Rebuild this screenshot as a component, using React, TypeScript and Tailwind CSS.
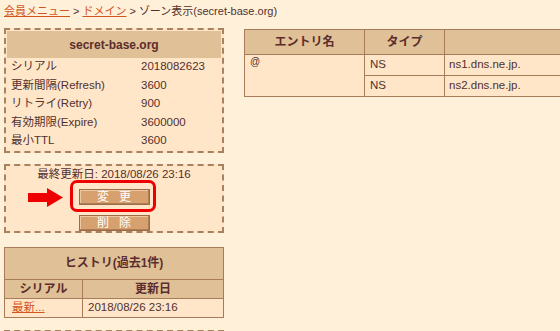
import React from "react";

const font = { fontFamily: '"Liberation Sans", "Noto Sans CJK JP", sans-serif' };

const soa = [
  ["シリアル", "2018082623"],
  ["更新間隔(Refresh)", "3600"],
  ["リトライ(Retry)", "900"],
  ["有効期限(Expire)", "3600000"],
  ["最小TTL", "3600"],
];

function Btn({ label }: { label: string }) {
  return (
    <button className="w-[71px] h-[16px] bg-[#d6a16f] border border-[#9c6c48] text-white text-[12px] leading-[14px] tracking-[10px] pl-[10px] shadow-[inset_-1px_-1px_0_#b07e55,inset_1px_1px_0_#ebc9a3]">
      {label}
    </button>
  );
}

export default function App() {
  return (
    <div
      className="w-[560px] h-[331px] overflow-hidden bg-[#fff0da] text-[#53302d] text-[11.5px]"
      style={font}
    >
      {/* breadcrumb */}
      <div className="h-[28px] pl-[4px] pt-[3px] leading-[16px] text-[11px]">
        <a className="text-[#d2541e] underline">会員メニュー</a>
        <span className="mx-[3px]">&gt;</span>
        <a className="text-[#d2541e] underline">ドメイン</a>
        <span className="mx-[3px]">&gt;</span>
        <span>ゾーン表示(secret-base.org)</span>
      </div>

      <div className="flex gap-[20px] pl-[4px]">
        {/* left column */}
        <div className="w-[220px] shrink-0 flex flex-col">
          <div className="border-2 border-dashed border-[#a8825f] bg-[#ffe6c8] p-px">
            <div className="h-[27px] bg-[#e0c097] flex items-center justify-center font-bold text-[12px] text-[#5b2d2d]">
              secret-base.org
            </div>
            {soa.map(([k, v]) => (
              <div key={k} className="h-[18.4px] flex items-center pl-[4px] leading-none">
                <span className="w-[130px]">{k}</span>
                <span>{v}</span>
              </div>
            ))}
          </div>

          <div className="mt-[11px] h-[69px] border-2 border-dashed border-[#a8825f] bg-[#ffe6c8] flex flex-col items-center relative">
            <div className="mt-[1px] leading-[15px]">最終更新日: 2018/08/26 23:16</div>
            <div className="mt-[7px] relative">
              <Btn label="変更" />
              <div className="absolute -left-[9px] -top-[9px] w-[86px] h-[32px] border-[3px] border-[#ee0000] rounded-[7px]" />
            </div>
            <div className="mt-[9px]">
              <Btn label="削除" />
            </div>
            <svg className="absolute left-[22px] top-[22px]" width="36" height="19" viewBox="0 0 36 19">
              <polygon points="0,5 19,5 19,0 35,9.5 19,19 19,14 0,14" fill="#ee0000" />
            </svg>
          </div>

          <table className="mt-[14px] w-[220px] border-collapse border border-[#a67c5b] bg-[#ffe6c8]">
            <tbody>
              <tr className="h-[32px] bg-[#e0c097]">
                <th colSpan={2} className="border border-[#a67c5b] font-bold text-[12px] text-[#5b2d2d]">
                  ヒストリ(過去1件)
                </th>
              </tr>
              <tr className="h-[19px] bg-[#e0c097]">
                <th className="w-[78px] border border-[#a67c5b] font-bold text-[12px] text-[#5b2d2d] leading-none">シリアル</th>
                <th className="border border-[#a67c5b] font-bold text-[12px] text-[#5b2d2d] leading-none">更新日</th>
              </tr>
              <tr className="h-[19px]">
                <td className="border border-[#a67c5b] pl-[7px] leading-none">
                  <a className="text-[#d2541e] underline">最新...</a>
                </td>
                <td className="border border-[#a67c5b] pl-[5px] leading-none">2018/08/26 23:16</td>
              </tr>
            </tbody>
          </table>

          <div className="mt-[12px] h-[20px] border-2 border-dashed border-[#a8825f] bg-[#ffe6c8]" />
        </div>

        {/* right column */}
        <div className="pt-px">
          <table className="w-[330px] border-collapse border border-[#a67c5b] bg-[#ffe6c8]">
            <tbody>
              <tr className="h-[25px] bg-[#e0c097]">
                <th className="w-[120px] border border-[#a67c5b] font-bold text-[12px] text-[#5b2d2d]">エントリ名</th>
                <th className="w-[80px] border border-[#a67c5b] font-bold text-[12px] text-[#5b2d2d]">タイプ</th>
                <th className="border border-[#a67c5b]"></th>
              </tr>
              <tr className="h-[21px]">
                <td rowSpan={2} className="border border-[#a67c5b] align-top pl-[5px] pt-px text-[10px] leading-[12px]">@</td>
                <td className="border border-[#a67c5b] pl-[5px] leading-none">NS</td>
                <td className="border border-[#a67c5b] pl-[4px] leading-none">ns1.dns.ne.jp.</td>
              </tr>
              <tr className="h-[21px]">
                <td className="border border-[#a67c5b] pl-[5px] leading-none">NS</td>
                <td className="border border-[#a67c5b] pl-[4px] leading-none">ns2.dns.ne.jp.</td>
              </tr>
            </tbody>
          </table>
        </div>
      </div>
    </div>
  );
}
